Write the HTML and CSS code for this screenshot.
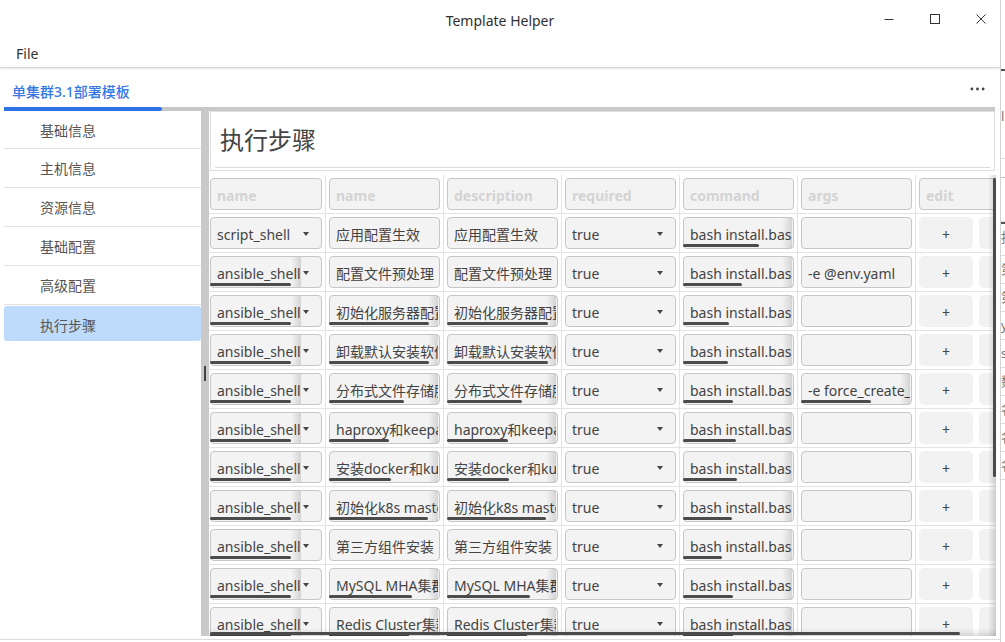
FILE: index.html
```html
<!DOCTYPE html>
<html lang="zh-CN">
<head>
<meta charset="utf-8">
<title>Template Helper</title>
<link rel="stylesheet" href="styles.css">
</head>
<body>
<div class="screen">
  <div class="app">
    <header class="titlebar">
      <div class="tb-side"></div>
      <div class="title">Template Helper</div>
      <div class="controls">
        <svg class="ctl" viewBox="0 0 12 12"><path d="M1.5 6.5H10.5"/></svg>
        <svg class="ctl" viewBox="0 0 12 12"><rect x="1.5" y="1.5" width="9" height="9"/></svg>
        <svg class="ctl" viewBox="0 0 12 12"><path d="M1.5 1.5L10.5 10.5M10.5 1.5L1.5 10.5"/></svg>
      </div>
    </header>
    <nav class="menubar"><span class="menu">File</span></nav>
    <div class="tabs">
      <div class="tabbar">
        <span class="tab">单集群3.1部署模板</span>
        <svg class="dots" viewBox="0 0 16 4"><circle cx="2" cy="2" r="1.5"/><circle cx="8" cy="2" r="1.5"/><circle cx="14" cy="2" r="1.5"/></svg>
      </div>
      <div class="tabline"><div class="tabline-active"></div></div>
    </div>
    <main class="main">
      <aside class="sidebar">
        <div class="nav-item">基础信息</div>
        <div class="nav-item">主机信息</div>
        <div class="nav-item">资源信息</div>
        <div class="nav-item">基础配置</div>
        <div class="nav-item">高级配置</div>
        <div class="nav-item active">执行步骤</div>
      </aside>
      <div class="splitter"><span class="grip"></span></div>
      <section class="content">
        <div class="heading-frame"><h1 class="heading">执行步骤</h1></div>
        <div class="table-wrap">
          <div class="grid">
            <div class="gc g1"><div class="f ph"><span class="t">name</span></div></div>
            <div class="gc"><div class="f ph"><span class="t">name</span></div></div>
            <div class="gc"><div class="f ph"><span class="t">description</span></div></div>
            <div class="gc"><div class="f ph"><span class="t">required</span></div></div>
            <div class="gc"><div class="f ph"><span class="t">command</span></div></div>
            <div class="gc"><div class="f ph"><span class="t">args</span></div></div>
            <div class="gc gedit"><div class="f ph"><span class="t">edit</span></div></div>

            <div class="gc g1"><div class="f combo"><span class="t">script_shell</span><i class="ar"></i></div></div>
            <div class="gc"><div class="f entry"><span class="t">应用配置生效</span></div></div>
            <div class="gc"><div class="f entry"><span class="t">应用配置生效</span></div></div>
            <div class="gc"><div class="f combo"><span class="t">true</span><i class="ar"></i></div></div>
            <div class="gc"><div class="f entry ov"><span class="t">bash install.bash</span><b class="sb" style="width:76px"></b></div></div>
            <div class="gc"><div class="f entry"><span class="t"></span></div></div>
            <div class="gc g7"><div class="f btn">+</div></div>
            <div class="gc g8"><div class="f btn"></div></div>

            <div class="gc g1"><div class="f combo ov"><span class="t">ansible_shell</span><i class="ar"></i><b class="sb" style="width:81px"></b></div></div>
            <div class="gc"><div class="f entry"><span class="t">配置文件预处理</span></div></div>
            <div class="gc"><div class="f entry"><span class="t">配置文件预处理</span></div></div>
            <div class="gc"><div class="f combo"><span class="t">true</span><i class="ar"></i></div></div>
            <div class="gc"><div class="f entry ov"><span class="t">bash install.bash</span><b class="sb" style="width:59px"></b></div></div>
            <div class="gc"><div class="f entry"><span class="t">-e @env.yaml</span></div></div>
            <div class="gc g7"><div class="f btn">+</div></div>
            <div class="gc g8"><div class="f btn"></div></div>

            <div class="gc g1"><div class="f combo ov"><span class="t">ansible_shell</span><i class="ar"></i><b class="sb" style="width:81px"></b></div></div>
            <div class="gc"><div class="f entry ov"><span class="t">初始化服务器配置</span><b class="sb" style="width:100px"></b></div></div>
            <div class="gc"><div class="f entry ov"><span class="t">初始化服务器配置</span><b class="sb" style="width:101px"></b></div></div>
            <div class="gc"><div class="f combo"><span class="t">true</span><i class="ar"></i></div></div>
            <div class="gc"><div class="f entry ov"><span class="t">bash install.bash</span><b class="sb" style="width:46px"></b></div></div>
            <div class="gc"><div class="f entry"><span class="t"></span></div></div>
            <div class="gc g7"><div class="f btn">+</div></div>
            <div class="gc g8"><div class="f btn"></div></div>

            <div class="gc g1"><div class="f combo ov"><span class="t">ansible_shell</span><i class="ar"></i><b class="sb" style="width:81px"></b></div></div>
            <div class="gc"><div class="f entry ov"><span class="t">卸载默认安装软件</span><b class="sb" style="width:100px"></b></div></div>
            <div class="gc"><div class="f entry ov"><span class="t">卸载默认安装软件</span><b class="sb" style="width:101px"></b></div></div>
            <div class="gc"><div class="f combo"><span class="t">true</span><i class="ar"></i></div></div>
            <div class="gc"><div class="f entry ov"><span class="t">bash install.bash</span><b class="sb" style="width:45px"></b></div></div>
            <div class="gc"><div class="f entry"><span class="t"></span></div></div>
            <div class="gc g7"><div class="f btn">+</div></div>
            <div class="gc g8"><div class="f btn"></div></div>

            <div class="gc g1"><div class="f combo ov"><span class="t">ansible_shell</span><i class="ar"></i><b class="sb" style="width:81px"></b></div></div>
            <div class="gc"><div class="f entry ov"><span class="t">分布式文件存储服务部署</span><b class="sb" style="width:75px"></b></div></div>
            <div class="gc"><div class="f entry ov"><span class="t">分布式文件存储服务部署</span><b class="sb" style="width:75px"></b></div></div>
            <div class="gc"><div class="f combo"><span class="t">true</span><i class="ar"></i></div></div>
            <div class="gc"><div class="f entry ov"><span class="t">bash install.bash</span><b class="sb" style="width:50px"></b></div></div>
            <div class="gc"><div class="f entry ov"><span class="t">-e force_create_vg=true</span><b class="sb" style="width:70px"></b></div></div>
            <div class="gc g7"><div class="f btn">+</div></div>
            <div class="gc g8"><div class="f btn"></div></div>

            <div class="gc g1"><div class="f combo ov"><span class="t">ansible_shell</span><i class="ar"></i><b class="sb" style="width:81px"></b></div></div>
            <div class="gc"><div class="f entry ov"><span class="t">haproxy和keepalived部署</span><b class="sb" style="width:60px"></b></div></div>
            <div class="gc"><div class="f entry ov"><span class="t">haproxy和keepalived部署</span><b class="sb" style="width:61px"></b></div></div>
            <div class="gc"><div class="f combo"><span class="t">true</span><i class="ar"></i></div></div>
            <div class="gc"><div class="f entry ov"><span class="t">bash install.bash</span><b class="sb" style="width:53px"></b></div></div>
            <div class="gc"><div class="f entry"><span class="t"></span></div></div>
            <div class="gc g7"><div class="f btn">+</div></div>
            <div class="gc g8"><div class="f btn"></div></div>

            <div class="gc g1"><div class="f combo ov"><span class="t">ansible_shell</span><i class="ar"></i><b class="sb" style="width:81px"></b></div></div>
            <div class="gc"><div class="f entry ov"><span class="t">安装docker和kubernetes</span><b class="sb" style="width:62px"></b></div></div>
            <div class="gc"><div class="f entry ov"><span class="t">安装docker和kubernetes</span><b class="sb" style="width:62px"></b></div></div>
            <div class="gc"><div class="f combo"><span class="t">true</span><i class="ar"></i></div></div>
            <div class="gc"><div class="f entry ov"><span class="t">bash install.bash</span><b class="sb" style="width:54px"></b></div></div>
            <div class="gc"><div class="f entry"><span class="t"></span></div></div>
            <div class="gc g7"><div class="f btn">+</div></div>
            <div class="gc g8"><div class="f btn"></div></div>

            <div class="gc g1"><div class="f combo ov"><span class="t">ansible_shell</span><i class="ar"></i><b class="sb" style="width:81px"></b></div></div>
            <div class="gc"><div class="f entry ov"><span class="t">初始化k8s master节点</span><b class="sb" style="width:99px"></b></div></div>
            <div class="gc"><div class="f entry ov"><span class="t">初始化k8s master节点</span><b class="sb" style="width:99px"></b></div></div>
            <div class="gc"><div class="f combo"><span class="t">true</span><i class="ar"></i></div></div>
            <div class="gc"><div class="f entry ov"><span class="t">bash install.bash</span><b class="sb" style="width:49px"></b></div></div>
            <div class="gc"><div class="f entry"><span class="t"></span></div></div>
            <div class="gc g7"><div class="f btn">+</div></div>
            <div class="gc g8"><div class="f btn"></div></div>

            <div class="gc g1"><div class="f combo ov"><span class="t">ansible_shell</span><i class="ar"></i><b class="sb" style="width:81px"></b></div></div>
            <div class="gc"><div class="f entry"><span class="t">第三方组件安装</span></div></div>
            <div class="gc"><div class="f entry"><span class="t">第三方组件安装</span></div></div>
            <div class="gc"><div class="f combo"><span class="t">true</span><i class="ar"></i></div></div>
            <div class="gc"><div class="f entry ov"><span class="t">bash install.bash</span><b class="sb" style="width:39px"></b></div></div>
            <div class="gc"><div class="f entry"><span class="t"></span></div></div>
            <div class="gc g7"><div class="f btn">+</div></div>
            <div class="gc g8"><div class="f btn"></div></div>

            <div class="gc g1"><div class="f combo ov"><span class="t">ansible_shell</span><i class="ar"></i><b class="sb" style="width:81px"></b></div></div>
            <div class="gc"><div class="f entry ov"><span class="t">MySQL MHA集群部署</span><b class="sb" style="width:83px"></b></div></div>
            <div class="gc"><div class="f entry ov"><span class="t">MySQL MHA集群部署</span><b class="sb" style="width:83px"></b></div></div>
            <div class="gc"><div class="f combo"><span class="t">true</span><i class="ar"></i></div></div>
            <div class="gc"><div class="f entry ov"><span class="t">bash install.bash</span><b class="sb" style="width:50px"></b></div></div>
            <div class="gc"><div class="f entry"><span class="t"></span></div></div>
            <div class="gc g7"><div class="f btn">+</div></div>
            <div class="gc g8"><div class="f btn"></div></div>

            <div class="gc g1"><div class="f combo ov"><span class="t">ansible_shell</span><i class="ar"></i><b class="sb" style="width:81px"></b></div></div>
            <div class="gc"><div class="f entry ov"><span class="t">Redis Cluster集群部署</span><b class="sb" style="width:80px"></b></div></div>
            <div class="gc"><div class="f entry ov"><span class="t">Redis Cluster集群部署</span><b class="sb" style="width:80px"></b></div></div>
            <div class="gc"><div class="f combo"><span class="t">true</span><i class="ar"></i></div></div>
            <div class="gc"><div class="f entry ov"><span class="t">bash install.bash</span><b class="sb" style="width:50px"></b></div></div>
            <div class="gc"><div class="f entry"><span class="t"></span></div></div>
            <div class="gc g7"><div class="f btn">+</div></div>
            <div class="gc g8"><div class="f btn"></div></div>
          </div>
          <div class="undershoot-right"></div>
          <div class="undershoot-bottom"></div>
          <div class="vscroll"></div>
          <div class="hscroll"></div>
        </div>
      </section>
    </main>
    <footer class="footer"><div class="footer-line"></div></footer>
  </div>
  <div class="edge"></div>
  <div class="behind">
    <div class="bh-mark"></div>
    <div class="bh-row bh-tall">l.</div>
    <div class="bh-row bh-gap"></div>
    <div class="bh-row bh-gap2"></div>
    <div class="bh-row bh-dark">抽</div>
    <div class="bh-row">第</div>
    <div class="bh-row">第</div>
    <div class="bh-row">y</div>
    <div class="bh-row">s</div>
    <div class="bh-row">数</div>
    <div class="bh-row">名</div>
    <div class="bh-row">名</div>
    <div class="bh-row">名</div>
  </div>
</div>
</body>
</html>
```

FILE: styles.css
```css
* {
  box-sizing: border-box;
  margin: 0;
  padding: 0;
}

html,
body {
  width: 1005px;
  height: 642px;
  overflow: hidden;
  background: #ffffff;
}

body {
  font-family: "Noto Sans", "Noto Sans CJK SC", sans-serif;
  font-size: 14px;
  color: #3d3d3d;
}

.screen {
  display: flex;
  width: 1005px;
  height: 642px;
}

.app {
  width: 1000px;
  height: 642px;
  flex: none;
  display: flex;
  flex-direction: column;
  background: #ffffff;
}

.edge {
  width: 1px;
  flex: none;
  background: #d4d4d4;
}

/* ---------- title bar ---------- */
.titlebar {
  height: 36px;
  flex: none;
  display: grid;
  grid-template-columns: 1fr auto 1fr;
  align-items: center;
  padding-top: 4px;
}

.title {
  font-size: 14px;
  color: #2f2f2f;
}

.controls {
  justify-self: end;
  display: flex;
  align-items: center;
  gap: 34px;
  padding-right: 13px;
  margin-top: -2px;
}

.ctl {
  width: 12px;
  height: 12px;
  fill: none;
  stroke: #333333;
  stroke-width: 1;
}

/* ---------- menu bar ---------- */
.menubar {
  height: 32px;
  flex: none;
  display: flex;
  align-items: center;
  padding: 3px 0 0 16px;
  border-bottom: 1px solid #d6d6d6;
  box-shadow: 0 1px 2px rgba(0, 0, 0, 0.1);
  position: relative;
  z-index: 1;
}

.menu {
  color: #333333;
}

/* ---------- tabs ---------- */
.tabs {
  flex: none;
  padding: 0 4px;
}

.tabbar {
  height: 39px;
  display: flex;
  align-items: center;
  justify-content: space-between;
  padding: 6px 11px 0 8px;
}

.tab {
  color: #3478e5;
  font-weight: 500;
}

.dots {
  width: 15px;
  height: 4px;
  fill: #444444;
  margin-top: -3px;
}

.tabline {
  height: 4px;
  display: flex;
  background: #c8c8c8;
  margin-right: 1px;
}

.tabline-active {
  width: 158px;
  background: #2f72e6;
  border-radius: 0 2px 2px 0;
}

/* ---------- main ---------- */
.main {
  flex: 1;
  min-height: 0;
  display: flex;
  padding: 0 4px;
}

.sidebar {
  width: 197px;
  flex: none;
  display: flex;
  flex-direction: column;
}

.nav-item {
  height: 39px;
  flex: none;
  display: flex;
  align-items: center;
  padding-left: 36px;
  border-bottom: 1px solid #e2e2e2;
  color: #555555;
}

.nav-item:first-child {
  height: 38px;
}

.nav-item.active {
  height: 35px;
  margin-top: 1px;
  border-bottom: none;
  border-radius: 3px;
  background: #bedbfc;
  padding-top: 2px;
}

.splitter {
  width: 8px;
  flex: none;
  background: #c9c9c9;
  display: flex;
  align-items: center;
  justify-content: center;
}

.grip {
  width: 2px;
  height: 15px;
  background: #444444;
}

.content {
  width: 787px;
  flex: none;
  display: flex;
  flex-direction: column;
  min-height: 0;
}

.heading-frame {
  flex: none;
  margin-left: 1px;
  width: 785px;
  height: 60px;
  border: 1px solid #dfdfdf;
  padding: 0 4px;
}

.heading {
  height: 56px;
  border-bottom: 1px solid #dcdcdc;
  font-size: 24px;
  font-weight: normal;
  line-height: 55px;
  padding-left: 5px;
  color: #444444;
}

/* ---------- table ---------- */
.table-wrap {
  flex: 1;
  min-height: 0;
  margin-top: 4px;
  position: relative;
  overflow: hidden;
}

.grid {
  display: grid;
  grid-template-columns: 117px repeat(5, 118px) 60px 60px;
  width: max-content;
}

.gc {
  padding: 3px;
  border-right: 1px solid #e4e4e4;
  border-bottom: 1px solid #e4e4e4;
}

.g1 {
  padding-left: 1px;
}

.g7,
.g8,
.gedit {
  border-right: none;
}

.gedit {
  grid-column: span 2;
}

.f {
  position: relative;
  height: 32px;
  display: flex;
  align-items: center;
  padding: 0 1px 0 6px;
  border: 1px solid #c6c6c6;
  border-radius: 4px;
  background: #f3f3f3;
  white-space: nowrap;
  color: #434343;
}

.t {
  flex: 1;
  min-width: 0;
  align-self: stretch;
  line-height: 30px;
  padding-top: 2px;
  overflow: hidden;
  position: relative;
}

.combo {
  padding-right: 12px;
}

.ar {
  flex: none;
  width: 0;
  height: 0;
  margin: 2px 0 0 2px;
  border-left: 3.5px solid transparent;
  border-right: 3.5px solid transparent;
  border-top: 4px solid #454545;
}

.ov .t::after {
  content: "";
  position: absolute;
  top: 0;
  right: 0;
  bottom: 0;
  width: 10px;
  background: linear-gradient(to right, rgba(0, 0, 0, 0), rgba(0, 0, 0, 0.13));
}

.sb {
  position: absolute;
  left: -1px;
  bottom: 1px;
  height: 3px;
  border-radius: 2px;
  background: #4b4b4b;
}

.ph {
  color: #d3d3d3;
  font-weight: 700;
}

.btn {
  border: none;
  border-radius: 5px;
  background: #f2f2f2;
  justify-content: center;
  padding: 2px 0 0;
  color: #444444;
}

.undershoot-right {
  position: absolute;
  top: 0;
  right: 0;
  bottom: 0;
  width: 8px;
  background: linear-gradient(to right, rgba(0, 0, 0, 0), rgba(0, 0, 0, 0.16));
}

.undershoot-bottom {
  position: absolute;
  left: 0;
  right: 0;
  bottom: 0;
  height: 8px;
  background: linear-gradient(to bottom, rgba(0, 0, 0, 0), rgba(0, 0, 0, 0.12));
}

.vscroll {
  position: absolute;
  top: 3px;
  right: 0;
  width: 3px;
  height: 299px;
  border-radius: 2px;
  background: #4a4a4a;
}

.hscroll {
  position: absolute;
  left: 1px;
  bottom: 1px;
  width: 750px;
  height: 3px;
  border-radius: 2px;
  background: #4a4a4a;
}

/* ---------- footer ---------- */
.footer {
  height: 6px;
  flex: none;
  padding-top: 3px;
}

.footer-line {
  height: 1px;
  background: #dcdcdc;
}

/* ---------- window behind ---------- */
.behind {
  width: 4px;
  flex: none;
  overflow: hidden;
  display: flex;
  flex-direction: column;
  padding-top: 69px;
  font-size: 13px;
  color: #777777;
}

.bh-mark {
  height: 2px;
  width: 4px;
  background: #555555;
  flex: none;
}

.bh-row {
  flex: none;
  height: 28px;
  border-bottom: 1px solid #dddddd;
  line-height: 27px;
  white-space: nowrap;
}

.bh-tall {
  height: 88px;
  line-height: 90px;
}

.bh-gap {
  height: 19px;
  border-bottom-color: #bbbbbb;
}

.bh-gap2 {
  height: 44px;
}

.bh-dark {
  border-top: 2px solid #555555;
  height: 34px;
}
```
